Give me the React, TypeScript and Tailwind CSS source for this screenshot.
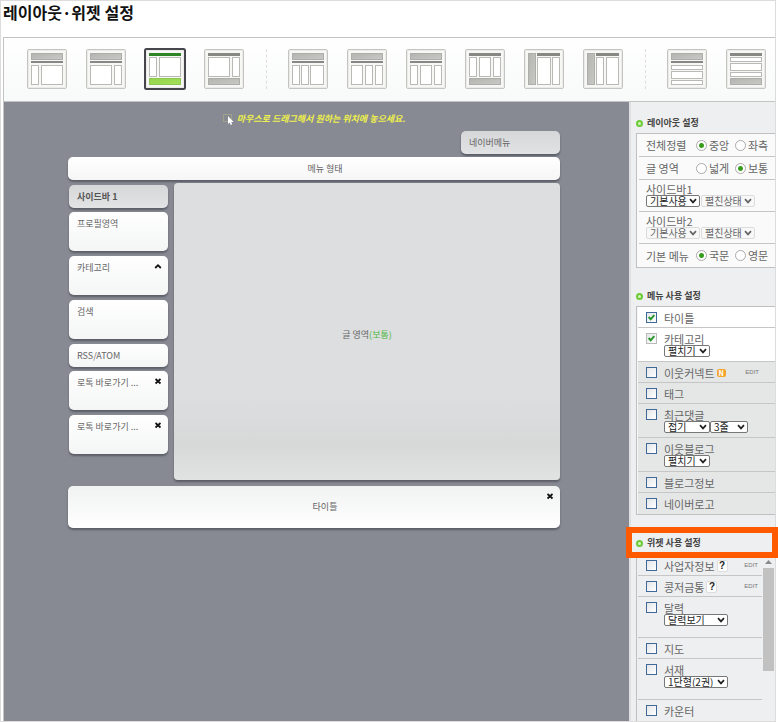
import React from 'react';
import clsx from 'clsx';

type Box = [x: number, y: number, w: number, h: number];

interface Layout {
  name: string;
  block: Box;
  bar: Box;
  cells: Box[];
  selected?: boolean;
}

const TOP_BLOCK: Box = [4, 4, 32, 7];
const UNDER_BAR: Box = [4, 12, 32, 2];
const TOP_BAR: Box = [4, 4, 32, 3];
const BOTTOM_BLOCK: Box = [4, 29, 32, 7];
const SIDE_BLOCK: Box = [4, 4, 8, 32];
const SIDE_BAR: Box = [13, 4, 23, 3];

const layoutGroups: Layout[][] = [
  [
    { name: '2단 왼쪽 사이드바', block: TOP_BLOCK, bar: UNDER_BAR, cells: [[4, 16, 8, 20], [14, 16, 22, 20]] },
    { name: '2단 오른쪽 사이드바', block: TOP_BLOCK, bar: UNDER_BAR, cells: [[4, 16, 22, 20], [28, 16, 8, 20]] },
    { name: '2단 하단 타이틀 왼쪽', block: BOTTOM_BLOCK, bar: TOP_BAR, cells: [[4, 8, 8, 20], [14, 8, 22, 20]], selected: true },
    { name: '2단 하단 타이틀 오른쪽', block: BOTTOM_BLOCK, bar: TOP_BAR, cells: [[4, 8, 22, 20], [28, 8, 8, 20]] },
  ],
  [
    { name: '3단 왼쪽', block: TOP_BLOCK, bar: UNDER_BAR, cells: [[4, 16, 8, 20], [13, 16, 8, 20], [22, 16, 14, 20]] },
    { name: '3단 오른쪽', block: TOP_BLOCK, bar: UNDER_BAR, cells: [[4, 16, 12, 20], [18, 16, 8, 20], [28, 16, 8, 20]] },
    { name: '3단 양쪽', block: TOP_BLOCK, bar: UNDER_BAR, cells: [[4, 16, 8, 20], [14, 16, 12, 20], [28, 16, 8, 20]] },
    { name: '3단 하단 타이틀', block: BOTTOM_BLOCK, bar: TOP_BAR, cells: [[4, 8, 8, 20], [14, 8, 12, 20], [28, 8, 8, 20]] },
    { name: '측면 타이틀 오른쪽', block: SIDE_BLOCK, bar: SIDE_BAR, cells: [[13, 8, 14, 28], [28, 8, 8, 28]] },
    { name: '측면 타이틀 왼쪽', block: SIDE_BLOCK, bar: SIDE_BAR, cells: [[13, 8, 8, 28], [23, 8, 13, 28]] },
  ],
  [
    { name: '1단 상단 타이틀', block: TOP_BLOCK, bar: UNDER_BAR, cells: [[4, 16, 32, 5], [4, 22, 32, 8], [4, 31, 32, 5]] },
    { name: '1단 하단 타이틀', block: BOTTOM_BLOCK, bar: TOP_BAR, cells: [[4, 8, 32, 5], [4, 14, 32, 8], [4, 23, 32, 5]] },
  ],
];

const LayoutButton = ({ layout }: { layout: Layout }) => {
  const [bx, by, bw, bh] = layout.block;
  const [rx, ry, rw, rh] = layout.bar;
  const on = layout.selected;
  return (
    <button type="button" aria-label={layout.name} aria-pressed={!!on} className="block h-10 w-10 shrink-0">
      <svg viewBox="0 0 40 40" className="h-10 w-10 overflow-visible">
        <defs>
          <linearGradient id="grayBlock" x1="0" y1="0" x2="1" y2="1">
            <stop offset="0" stopColor="#b3b3b0" />
            <stop offset="1" stopColor="#c9c9c6" />
          </linearGradient>
          <linearGradient id="greenBlock" x1="0" y1="0" x2="1" y2="1">
            <stop offset="0" stopColor="#93d44a" />
            <stop offset="1" stopColor="#a6e05c" />
          </linearGradient>
        </defs>
        <rect x="0.5" y="0.5" width="39" height="39" rx="1.5" fill="#f7f7f6" stroke="#c4c4c0" />
        <rect x="1.5" y="1.5" width="37" height="37" fill="none" stroke="#ebebe9" />
        {on && <rect x="0" y="0" width="40" height="40" rx="1.5" fill="none" stroke="#45454b" strokeWidth="2" />}
        <rect x={bx + 0.5} y={by + 0.5} width={bw - 1} height={bh - 1} fill={on ? 'url(#greenBlock)' : 'url(#grayBlock)'} stroke={on ? '#8cc751' : '#adadaa'} />
        <rect x={rx} y={ry} width={rw} height={rh} fill={on ? '#2f8526' : '#878784'} />
        {layout.cells.map(([x, y, w, h]) => (
          <rect key={`${x}-${y}`} x={x + 0.5} y={y + 0.5} width={w - 1} height={h - 1} fill="#fff" stroke="#b9b9b6" />
        ))}
      </svg>
    </button>
  );
};

const CloseButton = () => (
  <button type="button" aria-label="닫기" className="block h-2 w-2 shrink-0">
    <svg viewBox="0 0 8 8" className="h-2 w-2">
      <path d="M1.5 2 6.5 6.5M6.5 2 1.5 6.5" stroke="#111" strokeWidth="1.7" />
    </svg>
  </button>
);

const CollapseButton = () => (
  <button type="button" aria-label="접기" className="block h-2 w-2 shrink-0">
    <svg viewBox="0 0 8 8" className="h-2 w-2">
      <path d="M1.2 6 4 3.2 6.8 6" fill="none" stroke="#111" strokeWidth="1.8" />
    </svg>
  </button>
);

const blockShadow = 'shadow-[0_2px_2px_rgba(50,52,60,0.5)]';

interface SideBlock {
  label: string;
  tall?: boolean;
  head?: boolean;
  action?: React.ReactNode;
}

const sideBlocks: SideBlock[] = [
  { label: '사이드바 1', head: true },
  { label: '프로필영역', tall: true },
  { label: '카테고리', tall: true, action: <CollapseButton /> },
  { label: '검색', tall: true },
  { label: 'RSS/ATOM' },
  { label: '로톡 바로가기 ...', tall: true, action: <CloseButton /> },
  { label: '로톡 바로가기 ...', tall: true, action: <CloseButton /> },
];

const Sidebar = () => (
  <div className="w-[100px] shrink-0 pt-[2px] pl-px">
    {sideBlocks.map((block, i) => (
      <div
        key={i}
        className={clsx(
          'flex items-start justify-between rounded-[5px] pt-[6px] pr-[6px] pl-2',
          blockShadow,
          block.tall ? 'mb-[5px] h-[39px]' : 'mb-1 h-[23px]',
          block.head ? 'bg-linear-to-b from-[#d6d7d9] to-[#e2e3e5] font-bold text-[#555]' : 'bg-linear-to-b from-white to-[#f4f5f5]'
        )}
      >
        <span className="whitespace-nowrap">{block.label}</span>
        {block.action}
      </div>
    ))}
  </div>
);

const Canvas = () => (
  <main className="min-w-0 flex-1 bg-[#878a93] pt-[9px] pr-[69px] pl-16 text-[9px] leading-[12px] text-[#666]">
    <p className="flex h-4 items-center justify-center gap-[3px] font-bold text-[#eff04c] italic">
      <svg viewBox="0 0 11 12" className="h-3 w-[11px]">
        <rect x="0.5" y="1.5" width="8" height="7" fill="none" stroke="#b5b87c" strokeDasharray="1 1" />
        <path d="M5 3v8l1.7-1.5 1 2.4 1.5-.7-1-2.2h2.4z" fill="#fff" />
      </svg>
      마우스로 드래그해서 원하는 위치에 놓으세요.
    </p>
    <div className={clsx('mt-1 ml-auto flex h-[23px] w-[99px] items-center rounded-[5px] bg-linear-to-b from-[#d6d7d8] to-[#e1e2e3] pl-2', blockShadow)}>
      네이버메뉴
    </div>
    <div className={clsx('mt-[3px] flex h-[23px] items-center justify-center rounded-[5px] bg-linear-to-b from-white to-[#f6f6f7] pl-[22px]', blockShadow)}>
      메뉴 형태
    </div>
    <div className="mt-[3px] flex gap-[6px]">
      <Sidebar />
      <section
        className={clsx(
          'flex h-[297px] flex-1 items-center justify-center rounded-[4px] bg-linear-to-b from-[#dcdee0] from-70% via-[#d7d9d9] via-88% to-[#e1e2e2] pt-[6px]',
          blockShadow
        )}
      >
        글 영역<span className="text-[#4db83c]">(보통)</span>
      </section>
    </div>
    <div className={clsx('relative mt-[6px] flex h-[42px] items-center justify-center rounded-[5px] bg-linear-to-b from-[#f1f2f2] to-white pl-[22px]', blockShadow)}>
      타이틀
      <div className="absolute top-[6px] right-[6px]">
        <CloseButton />
      </div>
    </div>
  </main>
);

const Select = ({ label, value, width, faded, pale }: { label: string; value: string; width: string; faded?: boolean; pale?: boolean }) => (
  <span className={clsx('relative block', width)}>
    <select
      aria-label={label}
      className={clsx(
        'block h-3 w-full appearance-none rounded-[2px] border pl-[3px] text-[10px] leading-[10px]',
        pale ? 'border-[#dcdcdc] bg-[#f8f8f8]' : 'border-[#777] bg-white',
        faded ? 'text-[#666]' : 'text-[#222]'
      )}
    >
      <option>{value}</option>
    </select>
    <svg viewBox="0 0 8 6" className="pointer-events-none absolute top-[3px] right-[3px] h-[6px] w-2">
      <path d="M1 1.2 4 4.4 7 1.2" fill="none" stroke={faded ? '#666' : '#222'} strokeWidth="1.7" />
    </svg>
  </span>
);

const SectionTitle = ({ children }: { children: React.ReactNode }) => (
  <h2 className="flex h-5 items-center gap-1 text-[9px] leading-[12px] font-bold text-[#444]">
    <span className="h-[7px] w-[7px] rounded-full border-2 border-[#6ccb3b] bg-[#d5f5b8]" />
    {children}
  </h2>
);

const RadioRow = ({ label, name, options, checked }: { label: string; name: string; options: string[]; checked: number }) => (
  <fieldset className="flex h-[23px] items-center border-b border-[#c6c6c6] pl-[7px] last:border-b-0">
    <legend className="float-left w-[50px] leading-[12px]">{label}</legend>
    {options.map((option, i) => (
      <label key={option} className="flex w-[39px] items-center gap-[2px] whitespace-nowrap">
        <input
          type="radio"
          name={name}
          defaultChecked={i === checked}
          className="h-[11px] w-[11px] shrink-0 appearance-none rounded-full border border-[#aaa] bg-white checked:bg-[radial-gradient(circle,#3a9c1d_2px,#fff_3px)]"
        />
        {option}
      </label>
    ))}
  </fieldset>
);

const SidebarRow = ({ label, disabled }: { label: string; disabled?: boolean }) => (
  <div className="h-8 border-b border-[#c6c6c6] pt-[3px] pl-[7px]">
    <div className="leading-[12px]">{label}</div>
    <div className="flex gap-px">
      <Select label={`${label} 사용`} value="기본사용" width="w-[54px]" faded={disabled} pale={disabled} />
      <Select label={`${label} 상태`} value="펼친상태" width="w-[54px]" faded pale />
    </div>
  </div>
);

interface Item {
  label: string;
  checked?: boolean;
  locked?: boolean;
  badge?: boolean;
  help?: boolean;
  edit?: boolean;
  selects?: { value: string; width: string }[];
}

const menuItems: Item[] = [
  { label: '타이틀', checked: true },
  { label: '카테고리', checked: true, locked: true, selects: [{ value: '펼치기', width: 'w-[46px]' }] },
  { label: '이웃커넥트', badge: true, edit: true },
  { label: '태그' },
  { label: '최근댓글', selects: [{ value: '접기', width: 'w-[46px]' }, { value: '3줄', width: 'w-[38px]' }] },
  { label: '이웃블로그', selects: [{ value: '펼치기', width: 'w-[46px]' }] },
  { label: '블로그정보' },
  { label: '네이버로고' },
];

const widgetItems: Item[] = [
  { label: '사업자정보', help: true, edit: true },
  { label: '콩저금통', help: true, edit: true },
  { label: '달력', selects: [{ value: '달력보기', width: 'w-16' }] },
  { label: '지도' },
  { label: '서재', selects: [{ value: '1단형(2권)', width: 'w-16' }] },
  { label: '카운터' },
];

const ItemRow = ({ item, roomy }: { item: Item; roomy?: boolean }) => (
  <li
    className={clsx(
      'flex items-start border-b border-[#c6c6c6] pt-[5px] pl-2 last:border-b-0',
      item.selects ? (roomy ? 'h-[41px]' : 'h-[34px]') : 'h-[21px]',
      !roomy && (item.checked ? 'bg-white' : 'bg-[#e5e6e6]')
    )}
  >
    <span className="relative h-[11px] w-[11px] shrink-0">
      <input
        id={item.label}
        type="checkbox"
        defaultChecked={item.checked}
        className={clsx(
          'peer block h-[11px] w-[11px] appearance-none border bg-linear-to-br from-[#e3e6e8] to-white',
          item.locked ? 'border-[#bbb]' : 'border-[#40699a]'
        )}
      />
      <svg viewBox="0 0 11 11" className="pointer-events-none absolute inset-0 hidden h-[11px] w-[11px] peer-checked:block">
        <path d="M2.7 5 4.7 7.3 8.3 3.2" fill="none" stroke="#26962a" strokeWidth="2" />
      </svg>
    </span>
    <div className="min-w-0 flex-1 pl-[7px]">
      <div className="flex h-3 items-center leading-[12px] whitespace-nowrap">
        <label htmlFor={item.label}>{item.label}</label>
        {item.badge && (
          <span className="ml-[2px] flex h-2 w-[9px] items-center justify-center rounded-[2px] bg-[#f5a52c] text-[7px] leading-[8px] font-bold text-white">N</span>
        )}
        {item.help && (
          <button type="button" className="ml-[2px] h-3 w-[11px] rounded-[2px] border border-[#ddd] bg-white font-[Arial,'Liberation_Sans',sans-serif] text-[10px] leading-[10px] font-bold text-[#222]">
            ?
          </button>
        )}
      </div>
      {item.selects && (
        <div className="flex">
          {item.selects.map((s) => (
            <Select key={s.value} label={`${item.label} ${s.value}`} value={s.value} width={s.width} />
          ))}
        </div>
      )}
    </div>
    {item.edit && (
      <a href="#edit" className={clsx("font-['Liberation_Sans',sans-serif] text-[6px] leading-[10px] text-[#777]", roomy ? 'mr-1' : 'mr-4')}>
        EDIT
      </a>
    )}
  </li>
);

const SettingsPanel = () => (
  <aside className="w-[146px] shrink-0 border-l-2 border-[#dfe0e2] bg-[#eeeff0] pt-[11px] pl-[5px] text-[11px] text-[#666]">
    <SectionTitle>레이아웃 설정</SectionTitle>
    <div className="border border-r-0 border-[#c0c0c0] bg-[#fafafa] pl-[2px]">
      <RadioRow label="전체정렬" name="align" options={['중앙', '좌측']} checked={0} />
      <RadioRow label="글 영역" name="area" options={['넓게', '보통']} checked={1} />
      <SidebarRow label="사이드바1" />
      <SidebarRow label="사이드바2" disabled />
      <RadioRow label="기본 메뉴" name="menu" options={['국문', '영문']} checked={0} />
    </div>

    <div className="mt-[18px]">
      <SectionTitle>메뉴 사용 설정</SectionTitle>
      <ul className="border border-r-0 border-[#c0c0c0] bg-[#f6f6f6] pl-px">
        {menuItems.map((item) => (
          <ItemRow key={item.label} item={item} />
        ))}
      </ul>
    </div>

    <div className="relative mt-[18px] mb-[2px]">
      <SectionTitle>위젯 사용 설정</SectionTitle>
      {/* highlight frame around the widget heading */}
      <div className="pointer-events-none absolute -top-[6px] -right-[3px] -bottom-[5px] -left-[10px] z-10 border-6 border-[#ff5a00]" />
    </div>
    <div className="flex border-l border-[#c0c0c0]">
      <ul className="flex-1 pl-px">
        {widgetItems.map((item) => (
          <ItemRow key={item.label} item={item} roomy />
        ))}
      </ul>
      <div className="flex w-[13px] flex-col items-center pt-[5px]">
        <svg viewBox="0 0 7 4" className="mb-1 h-1 w-[7px]">
          <path d="M0 4 3.5 0 7 4z" fill="#8a8a8a" />
        </svg>
        <div className="h-[103px] w-[11px] bg-[#c1c1c1]" />
      </div>
    </div>
  </aside>
);

const App = () => (
  <div className="min-h-screen bg-white pr-[2px] font-['Noto_Sans_CJK_KR',sans-serif]">
    <div className="flex min-h-screen flex-col border border-[#dcdcdc] pl-[2px]">
      <h1 className="h-9 text-[16px] leading-[22px] font-bold text-[#111]">레이아웃·위젯 설정</h1>
      <div className="flex flex-1 flex-col border-t border-l border-[#c4c4c4]">
        <nav aria-label="레이아웃" className="flex h-16 items-center border-b border-[#c4c4c4] bg-linear-to-b from-white to-[#f8f9f9] pb-px pl-[23px]">
          {layoutGroups.map((group, i) => (
            <div key={i} className={clsx('flex gap-[19px]', i > 0 && 'ml-[22px] border-l border-dashed border-[#ddd] pl-[21px]')}>
              {group.map((layout) => (
                <LayoutButton key={layout.name} layout={layout} />
              ))}
            </div>
          ))}
        </nav>
        <div className="flex flex-1">
          <Canvas />
          <SettingsPanel />
        </div>
      </div>
    </div>
  </div>
);

export default App;
